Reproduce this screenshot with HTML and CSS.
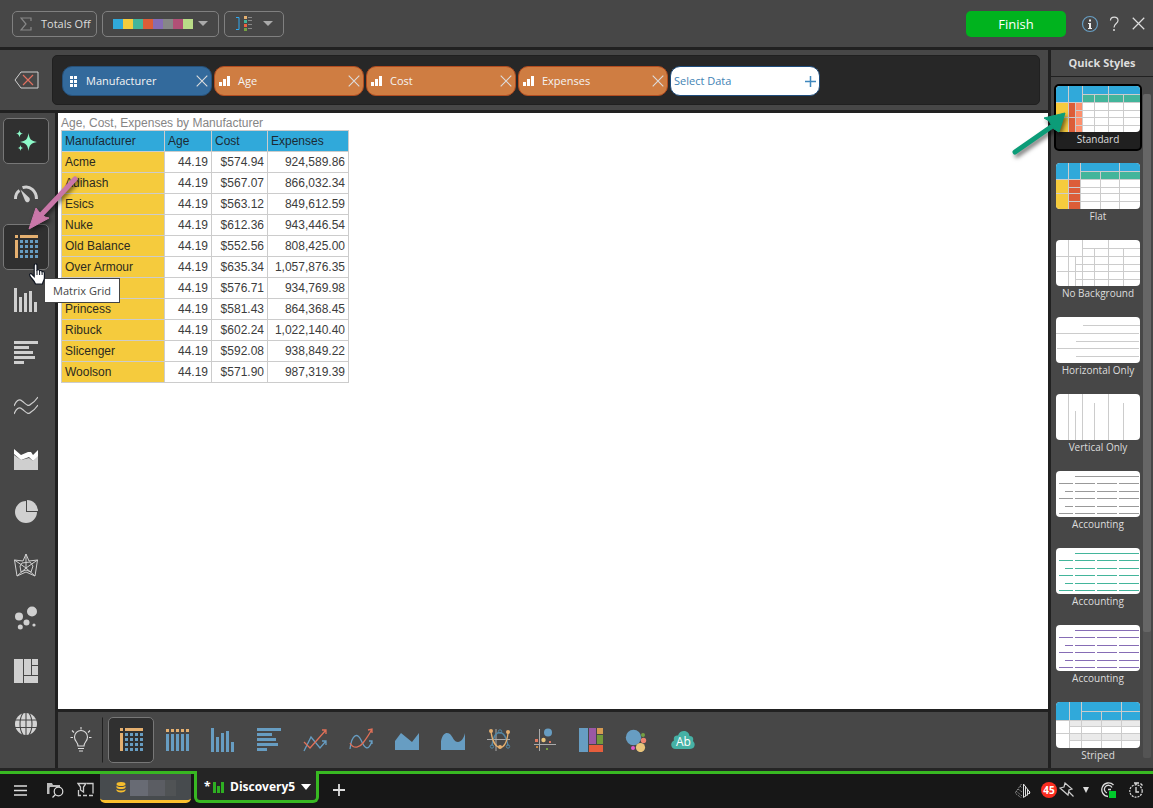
FILE: index.html
```html
<!DOCTYPE html>
<html lang="en">
<head>
<meta charset="utf-8">
<title>Discovery5</title>
<link rel="stylesheet" href="styles.css">
</head>
<body>
<svg class="sprite" aria-hidden="true">
  <symbol id="matrix" viewBox="0 0 24 24"><path fill="#e5b070" d="M1 0h3v3H1zM6 0h18v3H6zM1 5h3v18H1z"/><path fill="#679dc2" d="M6 5h3v3H6zM11 5h3v3h-3zM16 5h3v3h-3zM21 5h3v3h-3zM6 10h3v3H6zM11 10h3v3h-3zM16 10h3v3h-3zM21 10h3v3h-3zM6 15h3v3H6zM11 15h3v3h-3zM16 15h3v3h-3zM21 15h3v3h-3zM6 20h3v3H6zM11 20h3v3h-3zM16 20h3v3h-3zM21 20h3v3h-3z"/></symbol>
  <symbol id="columns" viewBox="0 0 24 24"><path d="M0 0h3v24H0zM5 9h3v15H5zM10 5h3v19h-3zM15 3h3v21h-3zM20 14h3v10h-3z"/></symbol>
  <symbol id="bars" viewBox="0 0 24 24"><path d="M0 0h24v3H0zM0 5h15v3H0zM0 10h19v3H0zM0 15h21v3H0zM0 20h10v3H0z"/></symbol>
  <symbol id="close" viewBox="0 0 12 12"><path d="M.7.7l10.600 10.600M11.300.7L.7 11.300" fill="none" stroke="currentColor" stroke-width="1.100"/></symbol>
  <symbol id="measure" viewBox="0 0 12 12"><path d="M0 7h3v4H0zM4 4h3v7H4zM8 1h3v10H8z" fill="#fff"/></symbol>
  <symbol id="accounting" viewBox="0 0 84 46"><path d="M19 5.500h64M3 12.500h14m2 0h20m2 0h20m2 0h20M9 20.500h8m2 0h20m2 0h20m2 0h20M3 27.500h14m2 0h20m2 0h20m2 0h20M9 35.500h8m2 0h20m2 0h20m2 0h20M3 42.500h14m2 0h20m2 0h20m2 0h20" fill="none" stroke="currentColor"/></symbol>
</svg>

<header class="toolbar">
  <button class="tool totals"><svg width="12" height="14" viewBox="0 0 12 14"><path d="M11 4V1H1l5 6-5 6h10v-3" fill="none" stroke="#888" stroke-width="1.200"/></svg>Totals Off</button>
  <button class="tool palette" aria-label="Palette">
    <svg width="80" height="10" viewBox="0 0 80 10"><path fill="#30a9da" d="M0 0h10v10H0z"/><path fill="#f5cb3d" d="M10 0h10v10H10z"/><path fill="#43b59b" d="M20 0h10v10H20z"/><path fill="#dc5d38" d="M30 0h10v10H30z"/><path fill="#866cb5" d="M40 0h10v10H40z"/><path fill="#878787" d="M50 0h10v10H50z"/><path fill="#b15076" d="M60 0h10v10H60z"/><path fill="#b9dc87" d="M70 0h10v10H70z"/></svg>
    <svg class="caret" width="10" height="5" viewBox="0 0 10 5"><path d="M0 0h10L5 5z"/></svg>
  </button>
  <button class="tool legend" aria-label="Legend position">
    <svg width="18" height="16" viewBox="0 0 18 16"><path d="M1 1.500h3v12H1" fill="none" stroke="#30a9f0"/><path fill="#e5b070" d="M9 0h3v3H9z"/><path fill="#43b59b" d="M9 4h3v3H9z"/><path fill="#ee6340" d="M9 8h3v3H9z"/><path fill="#74a043" d="M9 12h3v3H9z"/><path d="M13 1.500h4m-4 3h4m-4 4h4m-4 4h4" stroke="#888"/></svg>
    <svg class="caret" width="10" height="5" viewBox="0 0 10 5"><path d="M0 0h10L5 5z"/></svg>
  </button>
  <span class="spacer"></span>
  <button class="finish">Finish</button>
  <button class="plain" aria-label="Information"><svg width="18" height="18" viewBox="0 0 18 18"><circle cx="9" cy="9" r="7.500" fill="none" stroke="#679dc2" stroke-width="1.200"/><path d="M8 4.500h2v2H8zM7 8h3v5h1v1H7v-1h1V9H7z" fill="#eee"/></svg></button>
  <button class="plain" aria-label="Help"><svg width="18" height="18" viewBox="0 0 18 18"><path d="M5.500 5.500C5.500 1 13 1 13 5.500c0 3-4 3-4 7" fill="none" stroke="#ddd" stroke-width="1.200"/><circle cx="9" cy="15" r="1" fill="#ddd"/></svg></button>
  <button class="plain" aria-label="Close"><svg width="13" height="13"><use href="#close"/></svg></button>
</header>

<div class="workspace">
  <main class="designer">
    <section class="fields">
      <button class="clear" aria-label="Clear all"><svg width="25" height="18" viewBox="0 0 25 18"><path d="M7 1h17v16H7L1 9z" fill="none" stroke="#d0d0d0"/><path d="M9 4l10 10M19 4L9 14" stroke="#e07060" stroke-width="1.200"/></svg></button>
      <div class="shelf">
        <div class="chip dimension"><svg width="12" height="12" viewBox="0 0 12 12"><path fill="#fff" d="M1 1h3v3H1zM5 1h3v3H5zM1 5h3v3H1zM5 5h3v3H5zM1 9h3v3H1zM5 9h3v3H5z"/></svg><span>Manufacturer</span><button aria-label="Remove Manufacturer"><svg width="12" height="12"><use href="#close"/></svg></button></div>
        <div class="chip"><svg width="12" height="12"><use href="#measure"/></svg><span>Age</span><button aria-label="Remove Age"><svg width="12" height="12"><use href="#close"/></svg></button></div>
        <div class="chip"><svg width="12" height="12"><use href="#measure"/></svg><span>Cost</span><button aria-label="Remove Cost"><svg width="12" height="12"><use href="#close"/></svg></button></div>
        <div class="chip"><svg width="12" height="12"><use href="#measure"/></svg><span>Expenses</span><button aria-label="Remove Expenses"><svg width="12" height="12"><use href="#close"/></svg></button></div>
        <button class="chip select">Select Data<svg width="11" height="11" viewBox="0 0 11 11"><path d="M5.500 0v11M0 5.500h11" stroke="#3f87bd" stroke-width="1.500"/></svg></button>
      </div>
    </section>

    <div class="body">
      <nav class="kinds">
        <button class="icon on" aria-label="Suggested"><svg width="24" height="24" viewBox="0 0 24 24"><path fill="#8dfac9" d="M14.500 4c.8 6 2.500 8 8.500 9-6 1-7.700 3-8.500 9-.8-6-2.500-8-8.500-9 6-1 7.700-3 8.500-9zM5.500 1c.4 2.500 1 3.200 3.500 3.700C6.500 5 5.900 6 5.500 8.500 5.100 6 4.500 5 2 4.700 4.500 4.200 5.100 3.500 5.500 1zM6.500 16c.3 2 1 2.700 3 3-2 .3-2.700 1-3 3-.3-2-1-2.700-3-3 2-.3 2.700-1 3-3z"/></svg></button>
        <button class="icon" aria-label="Gauge"><svg width="24" height="24" viewBox="0 0 24 24"><path d="M1.500 17c0-4 1.500-7 4-8.500M8.500 5.700C16 3 22.500 9 22.500 17" fill="none" stroke="#d0d0d0" stroke-width="3"/><path d="M6.500 7.500l9 8.500c1.500 4-3 6-4.500 2.500z" fill="#d0d0d0"/></svg></button>
        <div class="matrix-slot">
          <button class="icon on" aria-label="Matrix Grid" aria-describedby="tip"><svg width="24" height="24"><use href="#matrix"/></svg></button>
          <svg class="pointer-arrow" width="60" height="62" viewBox="0 0 60 62"><path d="M50 7L17 42" stroke="#c977a8" stroke-width="5" stroke-linecap="round"/><path d="M4 57L11 36l3 4 6 5 4 1z" fill="#c977a8" stroke="#c977a8" stroke-linejoin="round"/></svg>
          <svg class="hand" width="20" height="24" viewBox="0 0 20 24"><path d="M6.500 2.500c1.500-1.500 2.500-.5 2.500 1V8c1-.7 2.300-.3 2.600.8.8-.6 2.200-.3 2.500.9 1-.5 2.300 0 2.300 1.500V16c0 2-1.400 3-1.900 6H7.500C6 18 3 16.500 1.700 13.500c-.7-1.600 1.300-2.600 2.500-1l2 2V3.500z" fill="#fff" stroke="#111722" stroke-width="1.200"/><path d="M9 8v5M11.600 9v4M14.100 10v3" stroke="#111722"/></svg>
          <div class="tip" id="tip" role="tooltip">Matrix Grid</div>
        </div>
        <button class="icon" aria-label="Column"><svg width="24" height="24" fill="#cfcfcf"><use href="#columns"/></svg></button>
        <button class="icon" aria-label="Bar"><svg width="24" height="24" fill="#cfcfcf"><use href="#bars"/></svg></button>
        <button class="icon" aria-label="Line"><svg width="24" height="24" viewBox="0 0 24 24"><path d="M0 12C2 7 5 4 8 7c5 4 6 6 9 3 3-2 5-4 7-7M0 20c2-5 5-8 8-5 5 4 6 6 9 3 3-2 5-4 7-7" fill="none" stroke="#cfcfcf" stroke-width="1.200"/></svg></button>
        <button class="icon" aria-label="Area"><svg width="24" height="24" viewBox="0 0 24 24"><path d="M0 8l7 5 8-2 4 3 5-6v15H0z" fill="#cfcfcf"/><path d="M0 2l7 6 7-3h3l2 3 5-5v6l-5 5-4-4-8 3-7-6z" fill="#fff"/></svg></button>
        <button class="icon" aria-label="Pie"><svg width="24" height="24" viewBox="0 0 24 24"><path d="M12 1a11 11 0 1 0 11 11H12z" fill="#d0d0d0"/><path d="M13 0a11 11 0 0 1 11 11H13z" fill="#d0d0d0"/></svg></button>
        <button class="icon" aria-label="Radar"><svg width="24" height="24" viewBox="0 0 24 24"><path d="M12 1l3 7 8.500-1-2.500 16-9-4-9 4L.5 7 9 8zM12 1v14M.5 7L12 15l11.500-8M3 23l9-8 9 8M8 10l8-1 3 4-2 6-5-2-5 2-1-6z" fill="none" stroke="#cfcfcf"/></svg></button>
        <button class="icon" aria-label="Bubble"><svg width="24" height="24" viewBox="0 0 24 24" fill="#d0d0d0"><circle cx="18" cy="5.500" r="5"/><circle cx="5" cy="10.500" r="4"/><circle cx="12.500" cy="16.500" r="3"/><circle cx="6.300" cy="21" r="2.500"/><circle cx="20" cy="19" r="1.600"/></svg></button>
        <button class="icon" aria-label="Treemap"><svg width="24" height="24" viewBox="0 0 24 24"><path fill="#d0d0d0" d="M0 0h9v24H0zM10 0h7v16h-7zM18 0h6v6h-6zM18 7h6v9h-6zM10 17h14v7H10z"/></svg></button>
        <button class="icon" aria-label="Map"><svg width="24" height="24" viewBox="0 0 24 24"><circle cx="12" cy="12" r="11" fill="#d5d5d5"/><path d="M1 8h22M1 15.500h22M12 1v22M9 1c-4 6-4 16 0 22M15 1c4 6 4 16 0 22" fill="none" stroke="#474747" stroke-width="1.100"/></svg></button>
      </nav>

      <div class="stage">
        <section class="canvas">
          <table class="grid">
            <caption>Age, Cost, Expenses by Manufacturer</caption>
            <colgroup><col class="c-name"><col class="c-age"><col class="c-cost"><col class="c-exp"></colgroup>
            <thead><tr><th>Manufacturer</th><th>Age</th><th>Cost</th><th>Expenses</th></tr></thead>
            <tbody>
              <tr><th>Acme</th><td>44.19</td><td>$574.94</td><td>924,589.86</td></tr>
              <tr><th>Adihash</th><td>44.19</td><td>$567.07</td><td>866,032.34</td></tr>
              <tr><th>Esics</th><td>44.19</td><td>$563.12</td><td>849,612.59</td></tr>
              <tr><th>Nuke</th><td>44.19</td><td>$612.36</td><td>943,446.54</td></tr>
              <tr><th>Old Balance</th><td>44.19</td><td>$552.56</td><td>808,425.00</td></tr>
              <tr><th>Over Armour</th><td>44.19</td><td>$635.34</td><td>1,057,876.35</td></tr>
              <tr><th></th><td>44.19</td><td>$576.71</td><td>934,769.98</td></tr>
              <tr><th>Princess</th><td>44.19</td><td>$581.43</td><td>864,368.45</td></tr>
              <tr><th>Ribuck</th><td>44.19</td><td>$602.24</td><td>1,022,140.40</td></tr>
              <tr><th>Slicenger</th><td>44.19</td><td>$592.08</td><td>938,849.22</td></tr>
              <tr><th>Woolson</th><td>44.19</td><td>$571.90</td><td>987,319.39</td></tr>
            </tbody>
          </table>
        </section>

        <div class="variants">
          <button class="icon hint" aria-label="Suggestions"><svg width="24" height="26" viewBox="0 0 24 26"><path d="M9 19c0-4-3.500-4.500-3.500-9a6.500 6.500 0 0 1 13 0c0 4.500-3.500 5-3.500 9zM9 21.500h6M10 24h4M12 0v2.500M1.500 10.500H4M20 10.500h2.500M3 3.500l2 2M21 3.500l-2 2" fill="none" stroke="#ddd" stroke-width="1.100"/></svg></button>
          <button class="icon on" aria-label="Matrix"><svg width="24" height="24"><use href="#matrix"/></svg></button>
          <button class="icon" aria-label="Tabular"><svg width="24" height="24" viewBox="0 0 24 24"><path fill="#e5b070" d="M1 1h3v3H1zM6 1h3v3H6zM11 1h3v3h-3zM16 1h3v3h-3zM21 1h3v3h-3z"/><path fill="#679dc2" d="M1 6h3v17H1zM6 6h3v17H6zM11 6h3v17h-3zM16 6h3v17h-3zM21 6h3v17h-3z"/></svg></button>
          <button class="icon" aria-label="Column chart"><svg width="24" height="24" fill="#679dc2"><use href="#columns"/></svg></button>
          <button class="icon" aria-label="Bar chart"><svg width="24" height="24" fill="#679dc2"><use href="#bars"/></svg></button>
          <button class="icon" aria-label="Line chart"><svg width="24" height="24" viewBox="0 0 24 24" fill="none" stroke-width="1.300"><path d="M1 23L8 9l9 11 6-7M19 13h4v4" stroke="#679dc2"/><path d="M1 14l6 6L23 2M19 2h4v4" stroke="#e07058"/></svg></button>
          <button class="icon" aria-label="Spline chart"><svg width="24" height="24" viewBox="0 0 24 24" fill="none" stroke-width="1.300"><path d="M1 21C3 5 9 5 12 12s7 13 11 1M20 13h3v3" stroke="#679dc2"/><path d="M1 15c4 7 10 4 13 0s7-10 9-14M19 2l4-1v4" stroke="#e07058"/></svg></button>
          <button class="icon" aria-label="Area chart"><svg width="24" height="24" viewBox="0 0 24 24"><path fill="#679dc2" d="M0 13l6-8 11 9 7-9v17H0z"/></svg></button>
          <button class="icon" aria-label="Spline area chart"><svg width="24" height="24" viewBox="0 0 24 24"><path fill="#679dc2" d="M0 13C2 4 6 4 9 6c3 3 4 8 8 8 3 0 6-4 7-9v17H0z"/></svg></button>
          <button class="icon" aria-label="Point chart"><svg width="24" height="24" viewBox="0 0 24 24" fill="none"><path d="M9 1v22M0 11.500h23" stroke="#aaa"/><path d="M5 18C7 0 18 0 21 18" stroke="#5387a5" stroke-width="1.300"/><path d="M4 4c3 20 15 21 17 1" stroke="#e5b070" stroke-width="1.300"/><g fill="#e5b070"><circle cx="4" cy="3" r="2"/><circle cx="21" cy="4" r="2"/><circle cx="13" cy="19" r="2"/></g><g stroke="#5387a5"><circle cx="13" cy="3.500" r="1.700"/><circle cx="5" cy="18.500" r="1.700"/><circle cx="21" cy="18.500" r="1.700"/></g></svg></button>
          <button class="icon" aria-label="Scatter chart"><svg width="24" height="24" viewBox="0 0 24 24"><path d="M6.500 1v22M1 16.500h22" stroke="#aaa"/><circle cx="15" cy="4.500" r="4" fill="#679dc2"/><circle cx="10.500" cy="12" r="2.200" fill="#e9c47b"/><path fill="#e07860" d="M2 11h3v3H2zM16 13h2v2h-2z"/><path fill="#c98440" d="M3 18h2v2H3z"/><path fill="#74a043" d="M13 20h2v2h-2z"/></svg></button>
          <button class="icon" aria-label="Treemap chart"><svg width="24" height="24" viewBox="0 0 24 24"><path fill="#679dc2" d="M0 0h9v24H0z"/><path fill="#9a58a5" d="M10 0h7v16h-7z"/><path fill="#d69b52" d="M18 0h6v6h-6z"/><path fill="#739a3c" d="M18 7h6v9h-6z"/><path fill="#e65e3d" d="M10 17h14v7H10z"/></svg></button>
          <button class="icon" aria-label="Packed bubbles"><svg width="24" height="24" viewBox="0 0 24 24"><circle cx="8.500" cy="9.500" r="7.700" fill="#679dc2"/><circle cx="18" cy="7" r="2" fill="#74a043"/><circle cx="18.500" cy="12.500" r="2.700" fill="#ee8370"/><circle cx="15.500" cy="19.500" r="4.600" fill="#e9c47b"/><circle cx="8" cy="20" r="2" fill="#e058c8"/></svg></button>
          <button class="icon" aria-label="Word cloud"><svg width="24" height="24" viewBox="0 0 24 24"><path fill="#46b1a5" d="M5 21C-1 21-1 14 3 12.500 2 8 5 7 7 7.500 9 1 18 2 18.500 8c4 0 4 3 3.500 5 3 3 2 8-3 8z"/><text class="cloud-text" x="12.500" y="18" text-anchor="middle">Ab</text></svg></button>
        </div>
      </div>
    </div>
  </main>

  <aside class="styles">
    <h2>Quick Styles</h2>
    <div class="styles-body">
      <div class="list">
        <button class="style picked"><svg viewBox="0 0 84 46"><path fill="#30a9da" d="M0 0h84v9H0zM0 9h26v8H0z"/><path fill="#43b59b" d="M26 9h58v8H26z"/><path fill="#f5cb3d" d="M0 17h12v29H0z"/><path fill="#dc5d38" d="M12 17h8v29h-8z"/><path fill="#fd8f6c" d="M20 17h6v29h-6z"/><path class="rule" d="M12.500 0v46M26.500 0v46M19.500 17v29M38.500 8v38M52.500 0v46M67.500 8v38M26 8.500h58M0 16.500h84M20 24.500h64M0 31.500h84M20 39.500h64"/></svg>Standard<svg class="green-arrow" width="60" height="52" viewBox="0 0 60 52"><path d="M7 44L43 19" stroke="#0c9c78" stroke-width="5" stroke-linecap="round"/><path d="M57 5L51 24l-5-3-5-8-5-3z" fill="#0c9c78" stroke="#0c9c78" stroke-linejoin="round"/></svg></button>
        <button class="style"><svg viewBox="0 0 84 46"><path fill="#30a9da" d="M0 0h84v9H0zM0 9h25v8H0z"/><path fill="#43b59b" d="M25 9h59v8H25z"/><path fill="#f5cb3d" d="M0 17h12v29H0z"/><path fill="#dc5d38" d="M12 17h12v29H12z"/><path class="rule" d="M12.500 0v46M24.500 0v46M44.500 8v38M63.500 0v46M25 8.500h59M0 16.500h84M12 24.500h72M0 30.500h84M12 38.500h72"/></svg>Flat</button>
        <button class="style"><svg viewBox="0 0 84 46"><path class="rule" d="M12.500 0v46M19.500 17v29M26.500 0v46M38.500 8v38M52.500 0v46M67.500 8v38M26 8.500h58M0 16.500h84M20 24.500h64M1 31.500h83M20 39.500h64"/></svg>No Background</button>
        <button class="style"><svg viewBox="0 0 84 46"><path class="rule" d="M27 8.500h57M0 16.500h83M20 24.500h63M1 31.500h82M20 39.500h63"/></svg>Horizontal Only</button>
        <button class="style"><svg viewBox="0 0 84 46"><path class="rule" d="M12.500 0v46M19.500 17v29M26.500 0v46M38.500 9v37M52.500 0v46M67.500 9v37"/></svg>Vertical Only</button>
        <button class="style"><svg class="ink-gray"><use href="#accounting"/></svg>Accounting</button>
        <button class="style"><svg class="ink-green"><use href="#accounting"/></svg>Accounting</button>
        <button class="style"><svg class="ink-violet"><use href="#accounting"/></svg>Accounting</button>
        <button class="style"><svg viewBox="0 0 84 46"><path fill="#30a9da" d="M0 0h84v18H0z"/><path fill="#eaeaea" d="M13 18h71v6H13zM13 31h71v7H13z"/><path class="rule" d="M13.500 0v46M25.500 0v46M45.500 9v37M65.500 0v46M25 9.500h59M0 18.500h84M13 24.500h71M0 31.500h84M13 38.500h71"/></svg>Striped</button>
      </div>
      <div class="track"><div class="thumb"></div></div>
    </div>
  </aside>
</div>

<footer class="taskbar">
  <button class="task menu" aria-label="Menu"><svg width="14" height="11" viewBox="0 0 14 11"><path d="M0 1h13M0 5.500h13M0 10h13" stroke="#ddd" stroke-width="1.500"/></svg></button>
  <button class="task" aria-label="Browse content"><svg width="18" height="16" viewBox="0 0 18 16"><path d="M1 1h5l1 2h7v3H4v6H1z" fill="#bbb"/><path d="M4 12V5.500h10" fill="none" stroke="#171717"/><circle cx="12.500" cy="9.500" r="4.300" fill="#171717" stroke="#ddd" stroke-width="1.200"/><path d="M9.500 12.500L6.500 15.500" stroke="#ddd" stroke-width="1.300"/></svg></button>
  <button class="task" aria-label="Filters"><svg width="17" height="16" viewBox="0 0 17 16"><path d="M10 1.500h6v10M1.500 8v5.500H4M1 1.500h8L6.500 5v5l-3-2V5zM6 13.500h4M12 13.500h4" fill="none" stroke="#ccc" stroke-width="1.300"/></svg></button>
  <button class="tab source" aria-label="Data source"><svg width="10" height="11" viewBox="0 0 10 11" fill="#f5bd2d"><ellipse cx="5" cy="2" rx="4.500" ry="2"/><path d="M.5 3.500c1 2 8 2 9 0v2c-1 2-8 2-9 0zM.5 7c1 2 8 2 9 0v1.500c-1 2.500-8 2.500-9 0z"/></svg><span class="redacted"></span></button>
  <button class="tab current"><span class="dirty">*</span><svg width="12" height="12" viewBox="0 0 12 12"><path fill="#2eaf22" d="M0 1h3v11H0zM4 5h3v7H4zM8 1h3v11H8z"/></svg><b>Discovery5</b><svg width="10" height="6" viewBox="0 0 10 6"><path d="M0 0h10L5 6z" fill="#fff"/></svg></button>
  <button class="task add" aria-label="New tab"><svg width="12" height="12" viewBox="0 0 12 12"><path d="M6 0v12M0 6h12" stroke="#ddd" stroke-width="1.800"/></svg></button>
  <span class="spacer"></span>
  <button class="task" aria-label="Mirror"><svg width="16" height="15" viewBox="0 0 16 15"><path d="M8.500 1v13.500M10.500 3v10.500M12.500 6v6.500M14.500 8v3M8.500 1l6.500 8.500-6.500 5" fill="none" stroke="#ddd"/><path d="M6.500 1L0 10l6.500 5M3 6l4 3M5 3l2 2M1 8l6 5" fill="none" stroke="#888" stroke-dasharray="2 1"/></svg></button>
  <span class="count">45</span>
  <button class="task pin" aria-label="Pin"><svg width="16" height="16" viewBox="0 0 16 16"><path d="M6 1l7 6-3 1-1 5-8-7 4-1zM9.500 9.500l5 5" fill="none" stroke="#ccc" stroke-width="1.200"/></svg></button>
  <button class="task more" aria-label="More"><svg width="6" height="6" viewBox="0 0 6 6"><path d="M0 0h6L3 6z" fill="#ddd"/></svg></button>
  <button class="task status" aria-label="Connection status"><svg width="17" height="17" viewBox="0 0 17 17"><path d="M13.500 3A6.800 6.800 0 1 0 8 14.500M12 5.500A4 4 0 1 0 7 11M8 7.500h3" fill="none" stroke="#ddd" stroke-width="1.300"/><path fill="#00c92b" d="M9 9h7v7H9z"/></svg></button>
  <button class="task" aria-label="Session timer"><svg width="16" height="16" viewBox="0 0 16 16"><circle cx="8" cy="9" r="6.200" fill="none" stroke="#ddd" stroke-width="1.200" stroke-dasharray="2 1"/><path d="M6 1h5M8 1v2M8 5v5h3M12.500 1.500l2 2" fill="none" stroke="#ddd" stroke-width="1.300"/></svg></button>
</footer>
</body>
</html>
```

FILE: styles.css
```css
* { box-sizing: border-box; }

body {
  margin: 0;
  height: 100vh;
  display: flex;
  flex-direction: column;
  overflow: hidden;
  background: #474747;
  color: #ddd;
  font: 11px/16px "Open Sans", "Noto Sans", sans-serif;
}

button {
  margin: 0;
  padding: 0;
  border: 0;
  background: none;
  color: inherit;
  font: inherit;
}

svg { display: block; flex: none; }
.sprite { position: absolute; width: 0; height: 0; }
.spacer { flex: 1; }

/* Top toolbar */
.toolbar {
  flex: none;
  display: flex;
  align-items: center;
  gap: 5px;
  height: 50px;
  padding: 0 6px 0 12px;
  border-bottom: 3px solid #212121;
}
.tool {
  display: flex;
  align-items: center;
  height: 26px;
  padding: 0 10px;
  border: 1px solid #808080;
  border-radius: 5px;
  white-space: nowrap;
}
.totals { width: 85px; gap: 9px; padding: 0 0 0 7px; }
.palette { width: 117px; gap: 5px; }
.legend { width: 60px; gap: 10px; }
.caret { fill: #aaa; }
.finish {
  width: 100px;
  height: 26px;
  margin-right: 9px;
  border-radius: 5px;
  background: #00b31e;
  color: #fff;
  font-size: 13px;
}
.plain { display: flex; justify-content: center; width: 18px; margin-left: 1px; color: #ddd; }

/* Layout */
.workspace { flex: 1; display: flex; min-height: 0; }
.designer { flex: 1; display: flex; flex-direction: column; min-width: 0; }
.body { flex: 1; display: flex; min-height: 0; }
.stage { flex: 1; display: flex; flex-direction: column; min-width: 0; }

/* Field shelf */
.fields {
  display: flex;
  padding: 5px 8px 5px 0;
  border-bottom: 3px solid #212121;
}
.clear { display: flex; align-items: center; justify-content: center; width: 52px; }
.shelf {
  flex: 1;
  display: flex;
  align-items: center;
  gap: 2px;
  height: 50px;
  padding: 2px 9px 0;
  border: 1px solid #202020;
  border-radius: 5px;
  background: #272727;
}
.chip {
  display: flex;
  align-items: center;
  gap: 7px;
  width: 150px;
  height: 30px;
  padding: 0 3px 0 4px;
  border: 1px solid #b24c20;
  border-radius: 10px;
  background: #cf7d42;
  color: #f4f4f4;
}
.chip span { flex: 1; }
.chip button { color: #ddd; }
.dimension { gap: 5px; padding-left: 6px; border-color: #265078; background: #336a9c; }
.select {
  justify-content: space-between;
  padding: 0 3px;
  border-color: #1f4d7d;
  background: #fff;
  color: #3f83b4;
}

/* Visual kinds */
.kinds {
  flex: none;
  display: flex;
  flex-direction: column;
  gap: 7px;
  width: 58px;
  padding: 5px 0 0 3px;
  border-right: 3px solid #212121;
}
.icon {
  flex: none;
  display: flex;
  align-items: center;
  justify-content: center;
  width: 46px;
  height: 46px;
  border: 1px solid transparent;
  border-radius: 5px;
}
.icon.on { border-color: #777; background: #303030; }
.matrix-slot { position: relative; z-index: 2; }
.pointer-arrow {
  position: absolute;
  left: 22px;
  top: -52px;
  fill: none;
  filter: drop-shadow(2px 2px 2px #0008);
}
.hand { position: absolute; left: 25px; top: 38px; z-index: 1; }
.tip {
  position: absolute;
  left: 41px;
  top: 54px;
  width: 76px;
  height: 25px;
  border: 1px solid #444;
  background: #fff;
  color: #444;
  line-height: 24px;
  text-align: center;
  white-space: nowrap;
}

/* Report */
.canvas { flex: 1; padding: 3px; background: #fff; overflow: hidden; }
.grid {
  table-layout: fixed;
  width: 288px;
  border-collapse: collapse;
  color: #3c3c3c;
  font: 12px/14px "Liberation Sans", Arial, sans-serif;
}
.grid caption { height: 14px; color: #858585; text-align: left; white-space: nowrap; }
.c-name { width: 103px; }
.c-age { width: 47px; }
.c-cost { width: 56px; }
.c-exp { width: 81px; }
.grid th, .grid td {
  height: 21px;
  padding: 0 3px;
  border: 1px solid #ccc;
  font-weight: 400;
  text-align: right;
}
.grid th { background: #f5cb3d; color: #2c2a20; text-align: left; }
.grid thead th { background: #30a9da; color: #1c2a33; }

/* Chart variants */
.variants {
  flex: none;
  display: flex;
  align-items: center;
  height: 59px;
  border-top: 3px solid #212121;
}
.hint {
  width: 45px;
  margin-right: 5px;
  border-right: 1px solid #212121;
  border-radius: 0;
}
.cloud-text { fill: #fff; font: 12px "Open Sans", "Noto Sans", sans-serif; }

/* Quick styles */
.styles {
  flex: none;
  display: flex;
  flex-direction: column;
  width: 105px;
  border-left: 3px solid #212121;
}
.styles h2 {
  margin: 0;
  border-bottom: 1px solid #212121;
  color: #ddd;
  font: bold 11px/26px "Open Sans", "Noto Sans", sans-serif;
  text-align: center;
}
.styles-body { flex: 1; display: flex; gap: 1px; min-height: 0; padding: 7px 0 10px 3px; }
.list { display: flex; flex-direction: column; gap: 10px; width: 88px; }
.style {
  flex: none;
  position: relative;
  height: 67px;
  border: 2px solid transparent;
  border-radius: 5px;
  font-size: 10px;
  line-height: 15px;
  display: flex;
  flex-direction: column;
  align-items: center;
  white-space: nowrap;
}
.style > svg:first-child { width: 84px; height: 46px; border-radius: 4px; background: #fff; }
.picked { border-color: #000; background: #202020; }
.rule { fill: none; stroke: #ccc; }
.ink-gray { color: #999; }
.ink-green { color: #43b59b; }
.ink-violet { color: #866cb5; }
.green-arrow {
  position: absolute;
  left: -48px;
  top: 22px;
  fill: none;
  filter: drop-shadow(2px 3px 2px #0008);
}
.track { width: 8px; margin-top: 10px; background: #545454; border-radius: 2px; }
.thumb { height: 81%; background: #666; border-radius: 2px; }

/* Task bar */
.taskbar {
  flex: none;
  display: flex;
  height: 40px;
  border-top: 3px solid #252525;
  background: linear-gradient(#38b822 3px, #171717 3px);
  padding: 3px 2px 0 12px;
}
.task { display: flex; align-items: center; justify-content: center; width: 30px; height: 32px; }
.menu { width: 18px; margin-right: 10px; }
.source {
  display: flex;
  align-items: center;
  gap: 4px;
  width: 91px;
  height: 29px;
  padding: 1px 0 0 16px;
  border-bottom: 3px solid #fbc02d;
  border-radius: 0 0 5px 5px;
  background: #474b4e;
}
.redacted { width: 46px; height: 16px; background: linear-gradient(90deg, #686b74 18px, #5b5d63 18px 35px, #505355 35px); }
.current {
  display: flex;
  align-items: center;
  gap: 5px;
  width: 125px;
  height: 32px;
  margin: -3px 5px 0 3px;
  padding: 2px 0 0 7px;
  border: 3px solid #38b822;
  border-top: 0;
  border-radius: 0 0 6px 6px;
  background: #252525;
  color: #fff;
  font-size: 12px;
}
.current svg:last-child { margin-left: 1px; }
.dirty { width: 4px; font-weight: 700; }
.count {
  align-self: center;
  width: 16px;
  height: 16px;
  margin: 0 0 2px 3px;
  border-radius: 8px;
  background: #f92d20;
  color: #fff;
  font-size: 10px;
  font-weight: 700;
  text-align: center;
}
.pin { width: 20px; }
.more { width: 18px; }
.status { width: 26px; }
```
